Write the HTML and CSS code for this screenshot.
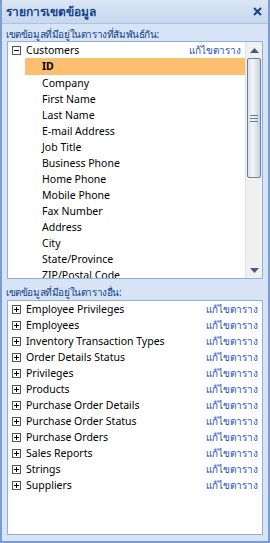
FILE: index.html
```html
<!DOCTYPE html>
<html lang="th">
<head>
    <meta charset="UTF-8">
    <meta name="viewport" content="width=device-width, initial-scale=1.0">
    <title>รายการเขตข้อมูล</title>
    <link rel="stylesheet" href="styles.css">
</head>
<body>
    <div class="pane">
        <!-- Title bar -->
        <div class="pane-head">
            <span class="pane-title">รายการเขตข้อมูล</span>
            <span class="close-btn">
                <svg width="9" height="9" viewBox="0 0 9 9"><path d="M1 1 L8 8 M8 1 L1 8" stroke="#15428b" stroke-width="2"/></svg>
            </span>
        </div>

        <!-- Related table fields -->
        <div class="section-label first">เขตข้อมูลที่มีอยู่ในตารางที่สัมพันธ์กัน:</div>
        <div class="field-list top-list">
            <div class="rows">
                <div class="table-row">
                    <span class="toggle">
                        <svg width="9" height="9" viewBox="0 0 9 9"><rect x="0.5" y="0.5" width="8" height="8" fill="#fff" stroke="#555"/><path d="M2 4.5 H7" stroke="#000"/></svg>
                    </span>
                    <span class="table-name">Customers</span>
                    <a class="edit-link" href="#">แก้ไขตาราง</a>
                </div>
                <div class="field selected">ID</div>
                <div class="field">Company</div>
                <div class="field">First Name</div>
                <div class="field">Last Name</div>
                <div class="field">E-mail Address</div>
                <div class="field">Job Title</div>
                <div class="field">Business Phone</div>
                <div class="field">Home Phone</div>
                <div class="field">Mobile Phone</div>
                <div class="field">Fax Number</div>
                <div class="field">Address</div>
                <div class="field">City</div>
                <div class="field">State/Province</div>
                <div class="field">ZIP/Postal Code</div>
            </div>
            <div class="scrollbar">
                <div class="arrow">
                    <svg width="9" height="5" viewBox="0 0 9 5"><path d="M0 5 L4.5 0 L9 5 Z" fill="#4a5a78"/></svg>
                </div>
                <div class="thumb">
                    <span class="grip"></span>
                    <span class="grip"></span>
                    <span class="grip"></span>
                </div>
                <div class="track"></div>
                <div class="arrow">
                    <svg width="9" height="5" viewBox="0 0 9 5"><path d="M0 0 L9 0 L4.5 5 Z" fill="#4a5a78"/></svg>
                </div>
            </div>
        </div>

        <!-- Other table fields -->
        <div class="section-label second">เขตข้อมูลที่มีอยู่ในตารางอื่น:</div>
        <div class="field-list bottom-list">
            <div class="table-row">
                <span class="toggle"><svg width="9" height="9" viewBox="0 0 9 9"><rect x="0.5" y="0.5" width="8" height="8" fill="#fff" stroke="#555"/><path d="M2 4.5 H7 M4.5 2 V7" stroke="#000"/></svg></span>
                <span class="table-name">Employee Privileges</span>
                <a class="edit-link" href="#">แก้ไขตาราง</a>
            </div>
            <div class="table-row">
                <span class="toggle"><svg width="9" height="9" viewBox="0 0 9 9"><rect x="0.5" y="0.5" width="8" height="8" fill="#fff" stroke="#555"/><path d="M2 4.5 H7 M4.5 2 V7" stroke="#000"/></svg></span>
                <span class="table-name">Employees</span>
                <a class="edit-link" href="#">แก้ไขตาราง</a>
            </div>
            <div class="table-row">
                <span class="toggle"><svg width="9" height="9" viewBox="0 0 9 9"><rect x="0.5" y="0.5" width="8" height="8" fill="#fff" stroke="#555"/><path d="M2 4.5 H7 M4.5 2 V7" stroke="#000"/></svg></span>
                <span class="table-name">Inventory Transaction Types</span>
                <a class="edit-link" href="#">แก้ไขตาราง</a>
            </div>
            <div class="table-row">
                <span class="toggle"><svg width="9" height="9" viewBox="0 0 9 9"><rect x="0.5" y="0.5" width="8" height="8" fill="#fff" stroke="#555"/><path d="M2 4.5 H7 M4.5 2 V7" stroke="#000"/></svg></span>
                <span class="table-name">Order Details Status</span>
                <a class="edit-link" href="#">แก้ไขตาราง</a>
            </div>
            <div class="table-row">
                <span class="toggle"><svg width="9" height="9" viewBox="0 0 9 9"><rect x="0.5" y="0.5" width="8" height="8" fill="#fff" stroke="#555"/><path d="M2 4.5 H7 M4.5 2 V7" stroke="#000"/></svg></span>
                <span class="table-name">Privileges</span>
                <a class="edit-link" href="#">แก้ไขตาราง</a>
            </div>
            <div class="table-row">
                <span class="toggle"><svg width="9" height="9" viewBox="0 0 9 9"><rect x="0.5" y="0.5" width="8" height="8" fill="#fff" stroke="#555"/><path d="M2 4.5 H7 M4.5 2 V7" stroke="#000"/></svg></span>
                <span class="table-name">Products</span>
                <a class="edit-link" href="#">แก้ไขตาราง</a>
            </div>
            <div class="table-row">
                <span class="toggle"><svg width="9" height="9" viewBox="0 0 9 9"><rect x="0.5" y="0.5" width="8" height="8" fill="#fff" stroke="#555"/><path d="M2 4.5 H7 M4.5 2 V7" stroke="#000"/></svg></span>
                <span class="table-name">Purchase Order Details</span>
                <a class="edit-link" href="#">แก้ไขตาราง</a>
            </div>
            <div class="table-row">
                <span class="toggle"><svg width="9" height="9" viewBox="0 0 9 9"><rect x="0.5" y="0.5" width="8" height="8" fill="#fff" stroke="#555"/><path d="M2 4.5 H7 M4.5 2 V7" stroke="#000"/></svg></span>
                <span class="table-name">Purchase Order Status</span>
                <a class="edit-link" href="#">แก้ไขตาราง</a>
            </div>
            <div class="table-row">
                <span class="toggle"><svg width="9" height="9" viewBox="0 0 9 9"><rect x="0.5" y="0.5" width="8" height="8" fill="#fff" stroke="#555"/><path d="M2 4.5 H7 M4.5 2 V7" stroke="#000"/></svg></span>
                <span class="table-name">Purchase Orders</span>
                <a class="edit-link" href="#">แก้ไขตาราง</a>
            </div>
            <div class="table-row">
                <span class="toggle"><svg width="9" height="9" viewBox="0 0 9 9"><rect x="0.5" y="0.5" width="8" height="8" fill="#fff" stroke="#555"/><path d="M2 4.5 H7 M4.5 2 V7" stroke="#000"/></svg></span>
                <span class="table-name">Sales Reports</span>
                <a class="edit-link" href="#">แก้ไขตาราง</a>
            </div>
            <div class="table-row">
                <span class="toggle"><svg width="9" height="9" viewBox="0 0 9 9"><rect x="0.5" y="0.5" width="8" height="8" fill="#fff" stroke="#555"/><path d="M2 4.5 H7 M4.5 2 V7" stroke="#000"/></svg></span>
                <span class="table-name">Strings</span>
                <a class="edit-link" href="#">แก้ไขตาราง</a>
            </div>
            <div class="table-row">
                <span class="toggle"><svg width="9" height="9" viewBox="0 0 9 9"><rect x="0.5" y="0.5" width="8" height="8" fill="#fff" stroke="#555"/><path d="M2 4.5 H7 M4.5 2 V7" stroke="#000"/></svg></span>
                <span class="table-name">Suppliers</span>
                <a class="edit-link" href="#">แก้ไขตาราง</a>
            </div>
        </div>
    </div>
</body>
</html>
```

FILE: styles.css
```css
* {
    margin: 0;
    padding: 0;
    box-sizing: border-box;
}

body {
    font-family: "Noto Sans", "DejaVu Sans", sans-serif;
    font-size: 10.5px;
    color: #000;
    width: 270px;
    height: 543px;
    overflow: hidden;
}

.pane {
    width: 270px;
    height: 543px;
    background: #d6e4f5;
    border: 2px solid #7b9ccf;
    border-top: none;
    display: flex;
    flex-direction: column;
}

.pane-head {
    height: 24px;
    flex-shrink: 0;
    display: flex;
    align-items: center;
    justify-content: space-between;
    padding: 0 6px 0 4px;
    background: linear-gradient(to bottom, #dbe6f4, #c6d8ef);
    border-bottom: 1px solid #aac3e6;
}

.pane-title {
    font-weight: bold;
    font-size: 12px;
    color: #15428b;
}

.close-btn {
    display: flex;
}

.section-label {
    color: #15428b;
    font-size: 10px;
    letter-spacing: -0.4px;
    padding-left: 4px;
    line-height: 14px;
    flex-shrink: 0;
    white-space: nowrap;
}

.section-label.first {
    height: 17px;
    padding-top: 3px;
}

.section-label.second {
    height: 21px;
    padding-top: 6px;
}

.field-list {
    margin: 0 5px;
    background: #fff;
    border: 1px solid #8fb0db;
}

.top-list {
    height: 238px;
    flex-shrink: 0;
    display: flex;
    overflow: hidden;
}

.bottom-list {
    flex: 1;
    margin-bottom: 6px;
}

.rows {
    flex: 1;
    overflow: hidden;
}

.table-row {
    height: 16px;
    display: flex;
    align-items: center;
    padding: 0 4px;
}

.toggle {
    display: flex;
    width: 9px;
    height: 9px;
    margin-right: 5px;
}

.table-name {
    flex: 1;
    white-space: nowrap;
    overflow: hidden;
}

.edit-link {
    color: #1d4fc2;
    text-decoration: none;
    font-size: 10px;
    margin-left: 6px;
}

.field {
    height: 16px;
    line-height: 16px;
    margin-left: 17px;
    padding-left: 17px;
    white-space: nowrap;
}

.field.selected {
    background: #fbbf6f;
    font-weight: bold;
    height: 17px;
}

.scrollbar {
    width: 17px;
    display: flex;
    flex-direction: column;
    background: #f0f0f0;
    border-left: 1px solid #e2e2e2;
}

.arrow {
    height: 16px;
    display: flex;
    align-items: center;
    justify-content: center;
}

.thumb {
    height: 120px;
    margin: 0 1px;
    border: 1px solid #6d7d9c;
    border-radius: 2px;
    background: linear-gradient(to right, #d9e2ee, #f3f6fa 40%, #c4d0e0);
    display: flex;
    flex-direction: column;
    justify-content: center;
    align-items: center;
    gap: 2px;
}

.grip {
    width: 8px;
    height: 1px;
    background: #6d7d9c;
}

.track {
    flex: 1;
}
```
